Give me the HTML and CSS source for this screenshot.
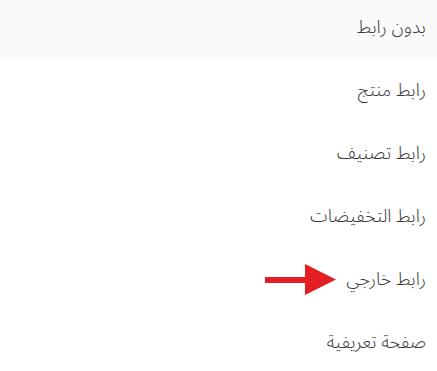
FILE: index.html
```html
<!DOCTYPE html>
<html lang="ar" dir="rtl">
<head>
    <meta charset="UTF-8">
    <meta name="viewport" content="width=device-width, initial-scale=1.0">
    <title>نوع الرابط</title>
    <link rel="stylesheet" href="styles.css">
</head>
<body>
    <ul class="link-list">
        <li class="link-item active">بدون رابط</li>
        <li class="link-item">رابط منتج</li>
        <li class="link-item">رابط تصنيف</li>
        <li class="link-item">رابط التخفيضات</li>
        <li class="link-item pointed">
            رابط خارجي
            <svg class="arrow" width="74" height="32" viewBox="0 0 74 32">
                <rect x="0" y="13" width="44" height="6" fill="#e31e24"/>
                <polygon points="40,0 71,15.5 40,31" fill="#e31e24"/>
            </svg>
        </li>
        <li class="link-item">صفحة تعريفية</li>
    </ul>
</body>
</html>
```

FILE: styles.css
```css
* {
    box-sizing: border-box;
}
body {
    margin: 0;
    background-color: #fff;
    font-family: "Noto Sans Arabic", "DejaVu Sans", sans-serif;
}
.link-list {
    list-style: none;
    margin: 0;
    padding: 0;
}
.link-item {
    position: relative;
    display: flex;
    align-items: center;
    height: 60px;
    margin-bottom: 3px;
    padding-right: 11px;
    padding-bottom: 6px;
    font-size: 18px;
    font-weight: 300;
    color: #3a3a3a;
}
.link-item.active {
    background-color: #fafafa;
}
.arrow {
    position: absolute;
    left: 265px;
    top: 12px;
}
```
